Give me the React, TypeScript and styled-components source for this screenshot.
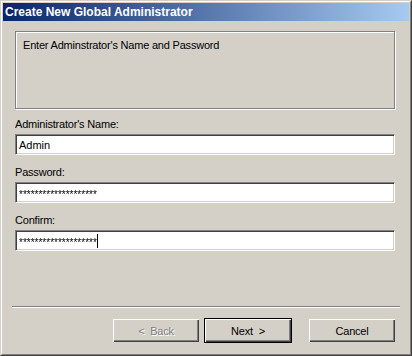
import styled, { createGlobalStyle } from "styled-components";

const GlobalStyle = createGlobalStyle`
    html, body {
        margin: 0;
        padding: 0;
        background: #d4d0c8;
    }
`

const Window = styled.div`
    box-sizing: border-box;
    width: 412px;
    height: 356px;
    background: #d4d0c8;
    border-top: 1px solid #d4d0c8;
    border-left: 1px solid #d4d0c8;
    border-right: 1px solid #404040;
    border-bottom: 1px solid #404040;
    display: flex;
    flex-direction: column;
    font-family: "Liberation Sans", Arial, sans-serif;
    font-size: 11px;
    letter-spacing: -0.2px;
    color: #000;
`

const Frame = styled.div`
    flex: 1;
    display: flex;
    flex-direction: column;
    padding: 1px;
    border-top: 1px solid #fff;
    border-left: 1px solid #fff;
    border-right: 1px solid #808080;
    border-bottom: 1px solid #808080;
`

const TitleBar = styled.div`
    height: 18px;
    display: flex;
    align-items: center;
    padding-left: 2px;
    background: linear-gradient(to right, #0a246a, #a6caf0);
    color: #fff;
    font-weight: bold;
    font-size: 12px;
    letter-spacing: 0;
`

const Body = styled.div`
    flex: 1;
    display: flex;
    flex-direction: column;
    padding: 10px 14px 0 12px;
`

const GroupBox = styled.div`
    box-sizing: border-box;
    height: 78px;
    border: 1px solid #808080;
    box-shadow: inset 1px 1px #fff, 1px 1px #fff;
    padding: 7px 7px;
    line-height: 13px;
`

const Fields = styled.div`
    display: flex;
    flex-direction: column;
    margin-top: 9px;
`

const Label = styled.div`
    line-height: 13px;
    height: 13px;
    margin-bottom: 3px;
`

const TextBox = styled.div`
    box-sizing: border-box;
    height: 21px;
    margin-bottom: 11px;
    background: #fff;
    border-top: 1px solid #808080;
    border-left: 1px solid #808080;
    border-right: 1px solid #fff;
    border-bottom: 1px solid #fff;
    box-shadow: inset 1px 1px #404040, inset -1px -1px #d4d0c8;
    padding: 0 3px;
    display: flex;
    align-items: center;
    letter-spacing: 0;
`

const Mask = styled.span`
    display: inline-block;
    padding-top: 3px;
    font-size: 10px;
    filter: grayscale(1);
`

const Caret = styled.span`
    display: inline-block;
    width: 1px;
    height: 14px;
    background: #000;
`

const Separator = styled.div`
    margin: auto -5px 0 -3px;
    border-top: 1px solid #808080;
    border-bottom: 1px solid #fff;
`

const ButtonRow = styled.div`
    display: flex;
    justify-content: flex-end;
    padding: 10px 0 10px;
    margin-right: -1px;
`

const Button = styled.div<{ $default?: boolean; $disabled?: boolean; $gap?: number }>`
    box-sizing: border-box;
    width: 88px;
    height: 25px;
    margin-left: ${p => p.$gap ?? 0}px;
    display: flex;
    align-items: center;
    justify-content: center;
    border: 1px solid ${p => p.$default ? '#000' : 'transparent'};
    box-shadow: inset 1px 1px #fff, inset -1px -1px #404040, inset -2px -2px #808080;
    color: ${p => p.$disabled ? '#808080' : '#000'};
    text-shadow: ${p => p.$disabled ? '1px 1px #fff' : 'none'};
    font-size: 11px;
    white-space: pre;
`

export default function App() {
    return (
        <Window>
            <GlobalStyle />
            <Frame>
                <TitleBar>Create New Global Administrator</TitleBar>
                <Body>
                    <GroupBox>Enter Adminstrator's Name and Password</GroupBox>
                    <Fields>
                        <Label>Administrator's Name:</Label>
                        <TextBox>Admin</TextBox>
                        <Label>Password:</Label>
                        <TextBox><Mask>********************</Mask></TextBox>
                        <Label>Confirm:</Label>
                        <TextBox><Mask>********************</Mask><Caret /></TextBox>
                    </Fields>
                    <Separator />
                    <ButtonRow>
                        <Button $disabled>{'<  Back'}</Button>
                        <Button $default $gap={4}>{'Next  >'}</Button>
                        <Button $gap={16}>Cancel</Button>
                    </ButtonRow>
                </Body>
            </Frame>
        </Window>
    )
}
